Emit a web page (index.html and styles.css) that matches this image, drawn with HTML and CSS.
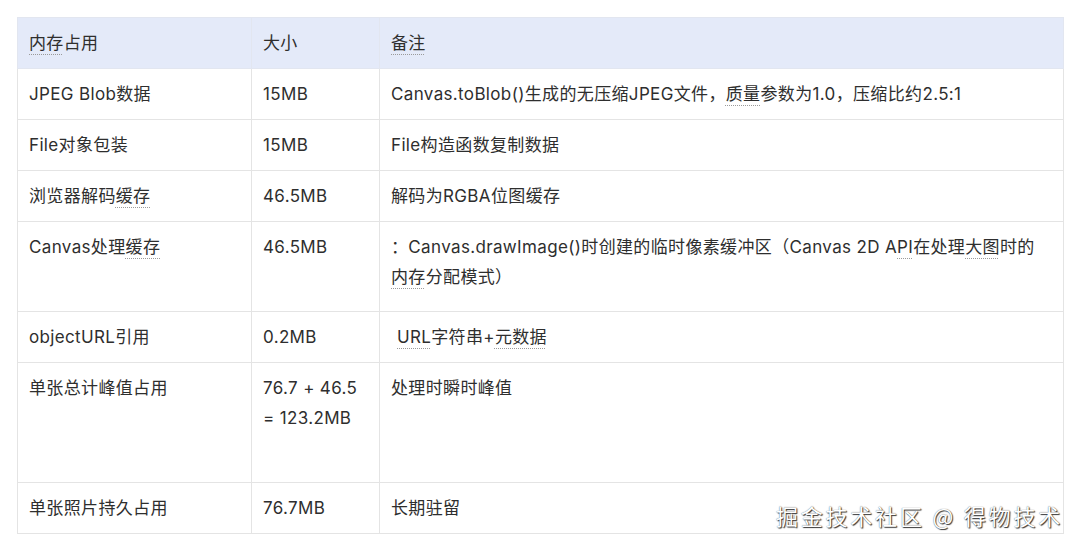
FILE: index.html
```html
<!DOCTYPE html>
<html lang="zh">
<head>
<meta charset="utf-8">
<link rel="stylesheet" href="styles.css">
</head>
<body>
<div class="page">
  <table class="mem">
    <colgroup>
      <col class="c1"><col class="c2"><col class="c3">
    </colgroup>
    <thead>
      <tr class="h51">
        <th><span class="dot">内存</span>占用</th>
        <th>大小</th>
        <th><span class="dot">备注</span></th>
      </tr>
    </thead>
    <tbody>
      <tr class="h51">
        <td>JPEG Blob数据</td>
        <td>15MB</td>
        <td>Canvas.toBlob()生成的无压缩JPEG文件，<span class="dot">质量</span>参数为1.0，压缩比约2.5:1</td>
      </tr>
      <tr class="h51">
        <td>File对象包装</td>
        <td>15MB</td>
        <td>File构造函数复制数据</td>
      </tr>
      <tr class="h51">
        <td>浏览器解码<span class="dot">缓存</span></td>
        <td>46.5MB</td>
        <td>解码为RGBA位图缓存</td>
      </tr>
      <tr class="h90">
        <td>Canvas处理<span class="dot">缓存</span></td>
        <td>46.5MB</td>
        <td>：Canvas.drawImage()时创建的临时像素缓冲区（Canvas 2D A<span class="dot">PI</span>在处理<span class="dot">大图</span>时的<br><span class="dot">内存</span>分配模式）</td>
      </tr>
      <tr class="h51">
        <td>objectURL引用</td>
        <td>0.2MB</td>
        <td><span class="indent"><span class="dot">URL</span>字符串+<span class="dot">元数据</span></span></td>
      </tr>
      <tr class="h120">
        <td>单张总计峰值占用</td>
        <td>76.7 + 46.5<br>= 123.2MB</td>
        <td>处理时瞬时峰值</td>
      </tr>
      <tr class="h51">
        <td>单张照片持久占用</td>
        <td>76.7MB</td>
        <td>长期驻留</td>
      </tr>
    </tbody>
  </table>
  <div class="watermark">掘金技术社区 @ 得物技术</div>
</div>
</body>
</html>
```

FILE: styles.css
```css
html, body {
  margin: 0;
  padding: 0;
  background: #ffffff;
}
.page {
  position: relative;
  width: 1080px;
  height: 549px;
  padding: 17px 0 0 17px;
  box-sizing: border-box;
  font-family: "Inter", "Noto Sans CJK SC", sans-serif;
  color: #2e2e2e;
}
.mem {
  border-collapse: collapse;
  table-layout: fixed;
  width: 1046px;
  font-size: 17px;
  line-height: 30px;
  letter-spacing: 0.35px;
}
.c1 { width: 234px; }
.c2 { width: 128px; }
.c3 { width: 684px; }
.mem th, .mem td {
  border: 1px solid #e4e4e4;
  padding: 10px 11px;
  text-align: left;
  vertical-align: top;
  font-weight: 400;
  box-sizing: border-box;
}
.mem thead th {
  background: #e4eaf9;
  border-color: #e2e6f0;
}
.h51 { height: 51px; }
.h90 { height: 90px; }
.h120 { height: 120px; }
.dot {
  text-decoration: underline dotted #9a9a9a;
  text-decoration-thickness: 1px;
  text-underline-offset: 5px;
}
.indent { padding-left: 6px; }
.watermark {
  position: absolute;
  right: 17px;
  bottom: 20px;
  font-family: "Noto Sans CJK SC", sans-serif;
  font-size: 22px;
  line-height: 28px;
  letter-spacing: 2.8px;
  color: #ffffff;
  text-shadow: 1px 1px 1px #333333, 0 0 1px #555555;
}
```
